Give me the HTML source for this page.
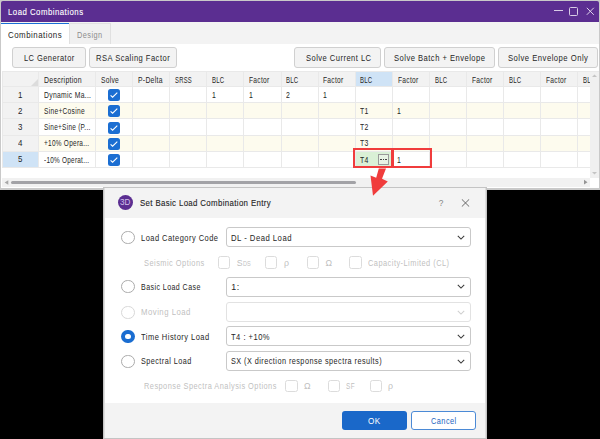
<!DOCTYPE html>
<html><head><meta charset="utf-8">
<style>
*{box-sizing:border-box;margin:0;padding:0}
html,body{width:600px;height:439px;overflow:hidden;background:#000}
body{position:relative;font-family:"Liberation Sans",sans-serif;color:#262626}
.a{position:absolute}
.t{position:absolute;line-height:1;white-space:pre}
</style></head><body>

<div class="a" style="left:0px;top:0px;width:600px;height:190px;background:#c9c9c9"></div>
<div class="a" style="left:1px;top:1px;width:598px;height:20.5px;background:#5b2e91;border-radius:2px 2px 0 0"></div>
<div class="a" style="left:1px;top:21.5px;width:597.8px;height:22.5px;background:#f3f3f3"></div>
<div class="a" style="left:1px;top:44px;width:597.8px;height:144.3px;background:#fff"></div>
<div class="t" style="left:8.20px;top:7.58px;font-size:9.0px;letter-spacing:0.55px;transform:scaleX(0.8692);transform-origin:0 0;color:#ffffff;-webkit-text-stroke:0.1px #fff">Load Combinations</div>
<div class="a" style="left:554px;top:10.2px;width:9px;height:1px;background:#d8cce6"></div>
<div class="a" style="left:569px;top:7px;width:9px;height:9px;border:1px solid #d8cce6;border-radius:1.5px"></div>
<svg class="a" style="left:585.5px;top:7px" width="9" height="9" viewBox="0 0 9 9"><path d="M0.8 0.8L7.8 7.8M7.8 0.8L0.8 7.8" stroke="#ddd2ea" stroke-width="1"/></svg>
<div class="a" style="left:1px;top:23px;width:68px;height:22px;background:#fff;border-top:1px solid #1a6fd6"></div>
<div class="a" style="left:69px;top:23px;width:42px;height:21px;background:#f0f0f0;border:1px solid #e0e0e0;border-bottom:none"></div>
<div class="t" style="left:7.50px;top:30.58px;font-size:9.0px;letter-spacing:0.55px;transform:scaleX(0.8787);transform-origin:0 0">Combinations</div>
<div class="t" style="left:76.70px;top:30.54px;font-size:8.7px;letter-spacing:0.55px;transform:scaleX(0.8433);transform-origin:0 0;color:#8c8c8c">Design</div>
<div class="a" style="left:12px;top:47.1px;width:74px;height:20.5px;background:#f3f3f3;border:1px solid #d0d0d0;border-radius:3px"></div>
<div class="t" style="left:23.60px;top:53.87px;font-size:8.9px;letter-spacing:0.55px;transform:scaleX(0.8400);transform-origin:0 0">LC Generator</div>
<div class="a" style="left:89px;top:47.1px;width:88px;height:20.5px;background:#f3f3f3;border:1px solid #d0d0d0;border-radius:3px"></div>
<div class="t" style="left:96.00px;top:53.87px;font-size:8.9px;letter-spacing:0.55px;transform:scaleX(0.8535);transform-origin:0 0">RSA Scaling Factor</div>
<div class="a" style="left:294px;top:47.1px;width:87px;height:20.5px;background:#f3f3f3;border:1px solid #d0d0d0;border-radius:3px"></div>
<div class="t" style="left:306.00px;top:53.87px;font-size:8.9px;letter-spacing:0.55px;transform:scaleX(0.8526);transform-origin:0 0">Solve Current LC</div>
<div class="a" style="left:384px;top:47.1px;width:111px;height:20.5px;background:#f3f3f3;border:1px solid #d0d0d0;border-radius:3px"></div>
<div class="t" style="left:394.00px;top:53.87px;font-size:8.9px;letter-spacing:0.55px;transform:scaleX(0.8585);transform-origin:0 0">Solve Batch + Envelope</div>
<div class="a" style="left:498px;top:47.1px;width:99.60000000000002px;height:20.5px;background:#f3f3f3;border:1px solid #d0d0d0;border-radius:3px"></div>
<div class="t" style="left:508.30px;top:53.87px;font-size:8.9px;letter-spacing:0.55px;transform:scaleX(0.8663);transform-origin:0 0">Solve Envelope Only</div>
<div class="a" style="left:2px;top:71px;width:588px;height:15px;background:#f2f2f2"></div>
<div class="a" style="left:2px;top:86px;width:36.5px;height:81px;background:#f2f2f2"></div>
<div class="a" style="left:38.5px;top:102.5px;width:551.5px;height:16.299999999999997px;background:#fdfbee"></div>
<div class="a" style="left:38.5px;top:135.0px;width:551.5px;height:16.099999999999994px;background:#fdfbee"></div>
<div class="a" style="left:355.2px;top:71px;width:37.10000000000002px;height:15px;background:#cfe3f6"></div>
<div class="a" style="left:2px;top:151.1px;width:36.5px;height:16.099999999999994px;background:#cfe3f6"></div>
<div class="a" style="left:355.2px;top:151.1px;width:37.10000000000002px;height:16.099999999999994px;background:#daf0d6"></div>
<div class="a" style="left:2px;top:71px;width:588px;height:107px;overflow:hidden">
<div class="a" style="left:36.00px;top:0;width:1px;height:96.20px;background:#e9e9e9"></div>
<div class="a" style="left:93.00px;top:0;width:1px;height:96.20px;background:#e9e9e9"></div>
<div class="a" style="left:130.10px;top:0;width:1px;height:96.20px;background:#e9e9e9"></div>
<div class="a" style="left:167.20px;top:0;width:1px;height:96.20px;background:#e9e9e9"></div>
<div class="a" style="left:204.30px;top:0;width:1px;height:96.20px;background:#e9e9e9"></div>
<div class="a" style="left:241.40px;top:0;width:1px;height:96.20px;background:#e9e9e9"></div>
<div class="a" style="left:278.50px;top:0;width:1px;height:96.20px;background:#e9e9e9"></div>
<div class="a" style="left:315.60px;top:0;width:1px;height:96.20px;background:#e9e9e9"></div>
<div class="a" style="left:352.70px;top:0;width:1px;height:96.20px;background:#e9e9e9"></div>
<div class="a" style="left:389.80px;top:0;width:1px;height:96.20px;background:#e9e9e9"></div>
<div class="a" style="left:426.90px;top:0;width:1px;height:96.20px;background:#e9e9e9"></div>
<div class="a" style="left:464.00px;top:0;width:1px;height:96.20px;background:#e9e9e9"></div>
<div class="a" style="left:501.10px;top:0;width:1px;height:96.20px;background:#e9e9e9"></div>
<div class="a" style="left:538.20px;top:0;width:1px;height:96.20px;background:#e9e9e9"></div>
<div class="a" style="left:575.30px;top:0;width:1px;height:96.20px;background:#e9e9e9"></div>
<div class="a" style="left:0;top:14.90px;width:588px;height:1px;background:#e9e9e9"></div>
<div class="a" style="left:0;top:31.00px;width:588px;height:1px;background:#e9e9e9"></div>
<div class="a" style="left:0;top:47.30px;width:588px;height:1px;background:#e9e9e9"></div>
<div class="a" style="left:0;top:63.50px;width:588px;height:1px;background:#e9e9e9"></div>
<div class="a" style="left:0;top:79.60px;width:588px;height:1px;background:#e9e9e9"></div>
<div class="a" style="left:0;top:95.70px;width:588px;height:1px;background:#e9e9e9"></div>
</div>
<div class="a" style="left:2px;top:71px;width:588px;height:1px;background:#e9e9e9"></div>
<div class="a" style="left:2px;top:71px;width:1px;height:96.2px;background:#e9e9e9"></div>
<svg class="a" style="left:30px;top:78px" width="9" height="9" viewBox="0 0 9 9"><path d="M1 8L8 1L8 8Z" fill="#dcdcdc"/></svg>
<div class="t" style="left:43.80px;top:75.59px;font-size:8.4px;letter-spacing:0.35px;transform:scaleX(0.8289);transform-origin:0 0">Description</div>
<div class="t" style="left:100.70px;top:75.59px;font-size:8.4px;letter-spacing:0.35px;transform:scaleX(0.7955);transform-origin:0 0">Solve</div>
<div class="t" style="left:137.80px;top:75.59px;font-size:8.4px;letter-spacing:0.35px;transform:scaleX(0.8133);transform-origin:0 0">P-Delta</div>
<div class="t" style="left:174.90px;top:75.59px;font-size:8.4px;letter-spacing:0.35px;transform:scaleX(0.7000);transform-origin:0 0">SRSS</div>
<div class="t" style="left:212.00px;top:75.59px;font-size:8.4px;letter-spacing:0.35px;transform:scaleX(0.7176);transform-origin:0 0">BLC</div>
<div class="t" style="left:249.10px;top:75.59px;font-size:8.4px;letter-spacing:0.35px;transform:scaleX(0.7923);transform-origin:0 0">Factor</div>
<div class="t" style="left:286.20px;top:75.59px;font-size:8.4px;letter-spacing:0.35px;transform:scaleX(0.7176);transform-origin:0 0">BLC</div>
<div class="t" style="left:323.30px;top:75.59px;font-size:8.4px;letter-spacing:0.35px;transform:scaleX(0.7923);transform-origin:0 0">Factor</div>
<div class="t" style="left:360.40px;top:75.59px;font-size:8.4px;letter-spacing:0.35px;transform:scaleX(0.7176);transform-origin:0 0">BLC</div>
<div class="t" style="left:397.50px;top:75.59px;font-size:8.4px;letter-spacing:0.35px;transform:scaleX(0.7923);transform-origin:0 0">Factor</div>
<div class="t" style="left:434.60px;top:75.59px;font-size:8.4px;letter-spacing:0.35px;transform:scaleX(0.7176);transform-origin:0 0">BLC</div>
<div class="t" style="left:471.70px;top:75.59px;font-size:8.4px;letter-spacing:0.35px;transform:scaleX(0.7923);transform-origin:0 0">Factor</div>
<div class="t" style="left:508.80px;top:75.59px;font-size:8.4px;letter-spacing:0.35px;transform:scaleX(0.7176);transform-origin:0 0">BLC</div>
<div class="t" style="left:545.90px;top:75.59px;font-size:8.4px;letter-spacing:0.35px;transform:scaleX(0.7923);transform-origin:0 0">Factor</div>
<div class="t" style="left:583.00px;top:75.59px;font-size:8.4px;letter-spacing:0.35px;transform:scaleX(0.7176);transform-origin:0 0">BLC</div>
<div class="t" style="left:17.90px;top:90.72px;font-size:8.6px;transform:scaleX(0.92);transform-origin:0 0">1</div>
<div class="t" style="left:43.60px;top:90.89px;font-size:8.4px;letter-spacing:0.35px;transform:scaleX(0.8140);transform-origin:0 0">Dynamic Ma...</div>
<div class="a" style="left:107.8px;top:89.05px;width:12px;height:12px;background:#1b6ed2;border-radius:2.5px"></div>
<svg class="a" style="left:107.8px;top:89.05px" width="12" height="12" viewBox="0 0 12 12"><path d="M2.6 6.3L4.6 8.2L9.3 3.6" fill="none" stroke="#fff" stroke-width="1.1"/></svg>
<div class="t" style="left:17.90px;top:106.82px;font-size:8.6px;transform:scaleX(0.92);transform-origin:0 0">2</div>
<div class="t" style="left:43.60px;top:106.99px;font-size:8.4px;letter-spacing:0.35px;transform:scaleX(0.7922);transform-origin:0 0">Sine+Cosine</div>
<div class="a" style="left:107.8px;top:105.25px;width:12px;height:12px;background:#1b6ed2;border-radius:2.5px"></div>
<svg class="a" style="left:107.8px;top:105.25px" width="12" height="12" viewBox="0 0 12 12"><path d="M2.6 6.3L4.6 8.2L9.3 3.6" fill="none" stroke="#fff" stroke-width="1.1"/></svg>
<div class="t" style="left:17.90px;top:123.12px;font-size:8.6px;transform:scaleX(0.92);transform-origin:0 0">3</div>
<div class="t" style="left:43.60px;top:123.29px;font-size:8.4px;letter-spacing:0.35px;transform:scaleX(0.7729);transform-origin:0 0">Sine+Sine (P...</div>
<div class="a" style="left:107.8px;top:121.50px;width:12px;height:12px;background:#1b6ed2;border-radius:2.5px"></div>
<svg class="a" style="left:107.8px;top:121.50px" width="12" height="12" viewBox="0 0 12 12"><path d="M2.6 6.3L4.6 8.2L9.3 3.6" fill="none" stroke="#fff" stroke-width="1.1"/></svg>
<div class="t" style="left:17.90px;top:139.32px;font-size:8.6px;transform:scaleX(0.92);transform-origin:0 0">4</div>
<div class="t" style="left:43.60px;top:139.49px;font-size:8.4px;letter-spacing:0.35px;transform:scaleX(0.7724);transform-origin:0 0">+10% Opera...</div>
<div class="a" style="left:107.8px;top:137.65px;width:12px;height:12px;background:#1b6ed2;border-radius:2.5px"></div>
<svg class="a" style="left:107.8px;top:137.65px" width="12" height="12" viewBox="0 0 12 12"><path d="M2.6 6.3L4.6 8.2L9.3 3.6" fill="none" stroke="#fff" stroke-width="1.1"/></svg>
<div class="t" style="left:17.90px;top:155.42px;font-size:8.6px;transform:scaleX(0.92);transform-origin:0 0">5</div>
<div class="t" style="left:43.60px;top:155.59px;font-size:8.4px;letter-spacing:0.35px;transform:scaleX(0.7627);transform-origin:0 0">-10% Operat...</div>
<div class="a" style="left:107.8px;top:153.75px;width:12px;height:12px;background:#1b6ed2;border-radius:2.5px"></div>
<svg class="a" style="left:107.8px;top:153.75px" width="12" height="12" viewBox="0 0 12 12"><path d="M2.6 6.3L4.6 8.2L9.3 3.6" fill="none" stroke="#fff" stroke-width="1.1"/></svg>
<div class="t" style="left:211.60px;top:90.89px;font-size:8.4px;letter-spacing:0.35px;transform:scaleX(0.82);transform-origin:0 0">1</div>
<div class="t" style="left:248.70px;top:90.89px;font-size:8.4px;letter-spacing:0.35px;transform:scaleX(0.82);transform-origin:0 0">1</div>
<div class="t" style="left:285.80px;top:90.89px;font-size:8.4px;letter-spacing:0.35px;transform:scaleX(0.82);transform-origin:0 0">2</div>
<div class="t" style="left:322.90px;top:90.89px;font-size:8.4px;letter-spacing:0.35px;transform:scaleX(0.82);transform-origin:0 0">1</div>
<div class="t" style="left:360.00px;top:106.99px;font-size:8.4px;letter-spacing:0.35px;transform:scaleX(0.82);transform-origin:0 0">T1</div>
<div class="t" style="left:397.10px;top:106.99px;font-size:8.4px;letter-spacing:0.35px;transform:scaleX(0.82);transform-origin:0 0">1</div>
<div class="t" style="left:360.00px;top:123.29px;font-size:8.4px;letter-spacing:0.35px;transform:scaleX(0.82);transform-origin:0 0">T2</div>
<div class="t" style="left:360.00px;top:139.49px;font-size:8.4px;letter-spacing:0.35px;transform:scaleX(0.82);transform-origin:0 0">T3</div>
<div class="t" style="left:360.00px;top:155.59px;font-size:8.4px;letter-spacing:0.35px;transform:scaleX(0.82);transform-origin:0 0">T4</div>
<div class="t" style="left:397.10px;top:155.59px;font-size:8.4px;letter-spacing:0.35px;transform:scaleX(0.82);transform-origin:0 0">1</div>
<div class="a" style="left:378.3px;top:154.2px;width:10.5px;height:10.6px;border:1px solid #9a9a9a;background:#e8f3e4"></div>
<div class="a" style="left:380.3px;top:158.7px;width:1.5px;height:1.4px;background:#444"></div>
<div class="a" style="left:382.8px;top:158.7px;width:1.5px;height:1.4px;background:#444"></div>
<div class="a" style="left:385.3px;top:158.7px;width:1.5px;height:1.4px;background:#444"></div>
<div class="a" style="left:590px;top:71px;width:8.5px;height:107px;background:#f0f0f0"></div>
<div class="a" style="left:590px;top:71px;width:8.5px;height:1px;background:#e9e9e9"></div>
<svg class="a" style="left:590px;top:71px" width="8" height="107" viewBox="0 0 8 107"><path d="M2 6L4.5 3.5L7 6Z" fill="#c4c4c4"/><path d="M2 101L4.5 103.5L7 101Z" fill="#c4c4c4"/></svg>
<div class="a" style="left:2px;top:178px;width:588px;height:8.8px;background:#f1f1f1"></div>
<div class="a" style="left:590px;top:178px;width:8px;height:8.8px;background:#fff"></div>
<div class="a" style="left:10.6px;top:180.5px;width:345.2px;height:3.6px;background:#a2a2a6;border-radius:2px"></div>
<svg class="a" style="left:2px;top:178px" width="588" height="9" viewBox="0 0 588 9"><path d="M6.3 2.2L2.6 4.5L6.3 6.8Z" fill="#a8a8a8"/><path d="M582 1.8L585.5 4.2L582 6.6Z" fill="#959595"/></svg>
<div class="a" style="left:103px;top:186.6px;width:384px;height:252.4px;background:#c4c4c4"></div>
<div class="a" style="left:104px;top:187.6px;width:382px;height:250.20000000000002px;background:#dedede"></div>
<div class="a" style="left:104.8px;top:187.6px;width:380.6px;height:250.20000000000002px;background:#f3f3f3"></div>
<div class="a" style="left:104.8px;top:217.5px;width:380.6px;height:185.0px;background:#fff"></div>
<div class="a" style="left:117.8px;top:194.6px;width:15px;height:15px;background:#5b2e91;border-radius:50%"></div>
<div class="t" style="left:120.20px;top:197.78px;font-size:9.0px;transform:scaleX(0.9);transform-origin:0 0;color:#d2c0ea;-webkit-text-stroke:0">3D</div>
<div class="t" style="left:139.80px;top:198.78px;font-size:9.0px;letter-spacing:0.4px;transform:scaleX(0.8740);transform-origin:0 0;-webkit-text-stroke:0.12px #1b1b1b">Set Basic Load Combination Entry</div>
<div class="t" style="left:438.80px;top:199.17px;font-size:8.3px;color:#858585;-webkit-text-stroke:0">?</div>
<svg class="a" style="left:461px;top:199px" width="9" height="8" viewBox="0 0 9 8"><path d="M0.8 0.3L8.2 7.6M8.2 0.3L0.8 7.6" stroke="#5a5a5a" stroke-width="0.9"/></svg>
<div class="a" style="left:121.4px;top:231.1px;width:13.2px;height:13.2px;border:1px solid #ababab;border-radius:50%;background:#fff"></div>
<div class="t" style="left:140.60px;top:233.75px;font-size:8.8px;letter-spacing:0.55px;transform:scaleX(0.8505);transform-origin:0 0">Load Category Code</div>
<div class="a" style="left:226.4px;top:227.39999999999998px;width:244.6px;height:20px;border:1px solid #c9c9c9;border-radius:3px;background:#fff"></div>
<svg class="a" style="left:457px;top:235.10px" width="8" height="5" viewBox="0 0 8 5"><path d="M0.8 0.8L4 4L7.2 0.8" fill="none" stroke="#3a3a3a" stroke-width="1.05"/></svg>
<div class="t" style="left:231.20px;top:233.75px;font-size:8.8px;letter-spacing:0.55px;transform:scaleX(0.8768);transform-origin:0 0">DL - Dead Load</div>
<div class="t" style="left:144.00px;top:258.75px;font-size:8.8px;letter-spacing:0.55px;transform:scaleX(0.8451);transform-origin:0 0;color:#bfbfbf">Seismic Options</div>
<div class="a" style="left:217.7px;top:256.4px;width:12.5px;height:12.2px;border:1px solid #dcdcdc;border-radius:2.5px;background:#fff"></div>
<div class="a" style="left:264.8px;top:256.4px;width:12.5px;height:12.2px;border:1px solid #dcdcdc;border-radius:2.5px;background:#fff"></div>
<div class="a" style="left:306.9px;top:256.4px;width:12.5px;height:12.2px;border:1px solid #dcdcdc;border-radius:2.5px;background:#fff"></div>
<div class="a" style="left:349.25px;top:256.4px;width:12.5px;height:12.2px;border:1px solid #dcdcdc;border-radius:2.5px;background:#fff"></div>
<div class="t" style="left:236.7px;top:258.75px;font-size:8.8px;color:#bfbfbf">S<span style="font-size:6.4px;display:inline-block;transform:scaleX(0.86);transform-origin:0 0">DS</span></div>
<div class="t" style="left:284.00px;top:258.75px;font-size:8.8px;color:#bfbfbf">ρ</div>
<div class="t" style="left:325.60px;top:258.75px;font-size:8.8px;color:#bfbfbf">Ω</div>
<div class="t" style="left:368.00px;top:258.75px;font-size:8.8px;letter-spacing:0.55px;transform:scaleX(0.8438);transform-origin:0 0;color:#bfbfbf">Capacity-Limited (CL)</div>
<div class="a" style="left:121.4px;top:280.2px;width:13.2px;height:13.2px;border:1px solid #ababab;border-radius:50%;background:#fff"></div>
<div class="t" style="left:140.70px;top:282.85px;font-size:8.8px;letter-spacing:0.55px;transform:scaleX(0.8000);transform-origin:0 0">Basic Load Case</div>
<div class="a" style="left:226.4px;top:276.5px;width:244.6px;height:20px;border:1px solid #c9c9c9;border-radius:3px;background:#fff"></div>
<svg class="a" style="left:457px;top:284.20px" width="8" height="5" viewBox="0 0 8 5"><path d="M0.8 0.8L4 4L7.2 0.8" fill="none" stroke="#3a3a3a" stroke-width="1.05"/></svg>
<div class="t" style="left:231.20px;top:282.85px;font-size:8.8px;letter-spacing:0.55px">1:</div>
<div class="a" style="left:121.4px;top:305.5px;width:13.2px;height:13.2px;border:1px solid #d8d8d8;border-radius:50%;background:#fff"></div>
<div class="t" style="left:140.70px;top:308.15px;font-size:8.8px;letter-spacing:0.55px;transform:scaleX(0.8839);transform-origin:0 0;color:#bfbfbf">Moving Load</div>
<div class="a" style="left:226.4px;top:301.8px;width:244.6px;height:20px;border:1px solid #e2e2e2;border-radius:3px;background:#fff"></div>
<svg class="a" style="left:457px;top:309.50px" width="8" height="5" viewBox="0 0 8 5"><path d="M0.8 0.8L4 4L7.2 0.8" fill="none" stroke="#cfcfcf" stroke-width="1.05"/></svg>
<div class="a" style="left:121.4px;top:329.9px;width:13.2px;height:13.2px;background:#1a6dd1;border-radius:50%"></div>
<div class="a" style="left:125.1px;top:333.6px;width:5.8px;height:5.8px;background:#fff;border-radius:50%"></div>
<div class="t" style="left:140.70px;top:332.55px;font-size:8.8px;letter-spacing:0.55px;transform:scaleX(0.8538);transform-origin:0 0">Time History Load</div>
<div class="a" style="left:226.4px;top:326.2px;width:244.6px;height:20px;border:1px solid #c9c9c9;border-radius:3px;background:#fff"></div>
<svg class="a" style="left:457px;top:333.90px" width="8" height="5" viewBox="0 0 8 5"><path d="M0.8 0.8L4 4L7.2 0.8" fill="none" stroke="#3a3a3a" stroke-width="1.05"/></svg>
<div class="t" style="left:231.20px;top:332.55px;font-size:8.8px;letter-spacing:0.55px;transform:scaleX(0.8622);transform-origin:0 0">T4 : +10%</div>
<div class="a" style="left:121.4px;top:354.59999999999997px;width:13.2px;height:13.2px;border:1px solid #ababab;border-radius:50%;background:#fff"></div>
<div class="t" style="left:140.70px;top:357.25px;font-size:8.8px;letter-spacing:0.55px;transform:scaleX(0.8246);transform-origin:0 0">Spectral Load</div>
<div class="a" style="left:226.4px;top:350.9px;width:244.6px;height:20px;border:1px solid #c9c9c9;border-radius:3px;background:#fff"></div>
<svg class="a" style="left:457px;top:358.60px" width="8" height="5" viewBox="0 0 8 5"><path d="M0.8 0.8L4 4L7.2 0.8" fill="none" stroke="#3a3a3a" stroke-width="1.05"/></svg>
<div class="t" style="left:231.20px;top:357.25px;font-size:8.8px;letter-spacing:0.55px;transform:scaleX(0.8280);transform-origin:0 0">SX (X direction response spectra results)</div>
<div class="t" style="left:144.00px;top:382.15px;font-size:8.8px;letter-spacing:0.55px;transform:scaleX(0.8408);transform-origin:0 0;color:#bfbfbf">Response Spectra Analysis Options</div>
<div class="a" style="left:285.4px;top:379.8px;width:12.5px;height:12.2px;border:1px solid #dcdcdc;border-radius:2.5px;background:#fff"></div>
<div class="a" style="left:327.6px;top:379.8px;width:12.5px;height:12.2px;border:1px solid #dcdcdc;border-radius:2.5px;background:#fff"></div>
<div class="a" style="left:369.7px;top:379.8px;width:12.5px;height:12.2px;border:1px solid #dcdcdc;border-radius:2.5px;background:#fff"></div>
<div class="t" style="left:304.00px;top:382.15px;font-size:8.8px;color:#bfbfbf">Ω</div>
<div class="t" style="left:346.30px;top:382.15px;font-size:8.8px;letter-spacing:0.55px;transform:scaleX(0.7250);transform-origin:0 0;color:#bfbfbf">SF</div>
<div class="t" style="left:388.00px;top:382.15px;font-size:8.8px;color:#bfbfbf">ρ</div>
<div class="a" style="left:342px;top:410.5px;width:64.5px;height:19.7px;background:#1a68c9;border-radius:3px"></div>
<div class="t" style="left:368.00px;top:416.65px;font-size:8.8px;letter-spacing:0.55px;transform:scaleX(0.9231);transform-origin:0 0;color:#ffffff">OK</div>
<div class="a" style="left:411.3px;top:410.5px;width:64.6px;height:19.7px;background:#fff;border:1px solid #4b8ad6;border-radius:3px"></div>
<div class="t" style="left:430.80px;top:416.65px;font-size:8.8px;letter-spacing:0.55px;transform:scaleX(0.8367);transform-origin:0 0;color:#1a64c0">Cancel</div>
<div class="a" style="left:353px;top:148.3px;width:40.5px;height:20.2px;border:2.7px solid #f03c3c"></div>
<div class="a" style="left:391.3px;top:148.3px;width:40.9px;height:20.2px;border:2.7px solid #f03c3c"></div>
<svg class="a" style="left:0;top:0" width="600" height="439" viewBox="0 0 600 439"><path d="M378.8 168.6L386 168.6L382 178.8L387.8 181.5L373 195.8L370.5 175.5L376.2 177.8Z" fill="#f03c3c"/></svg>
</body></html>
